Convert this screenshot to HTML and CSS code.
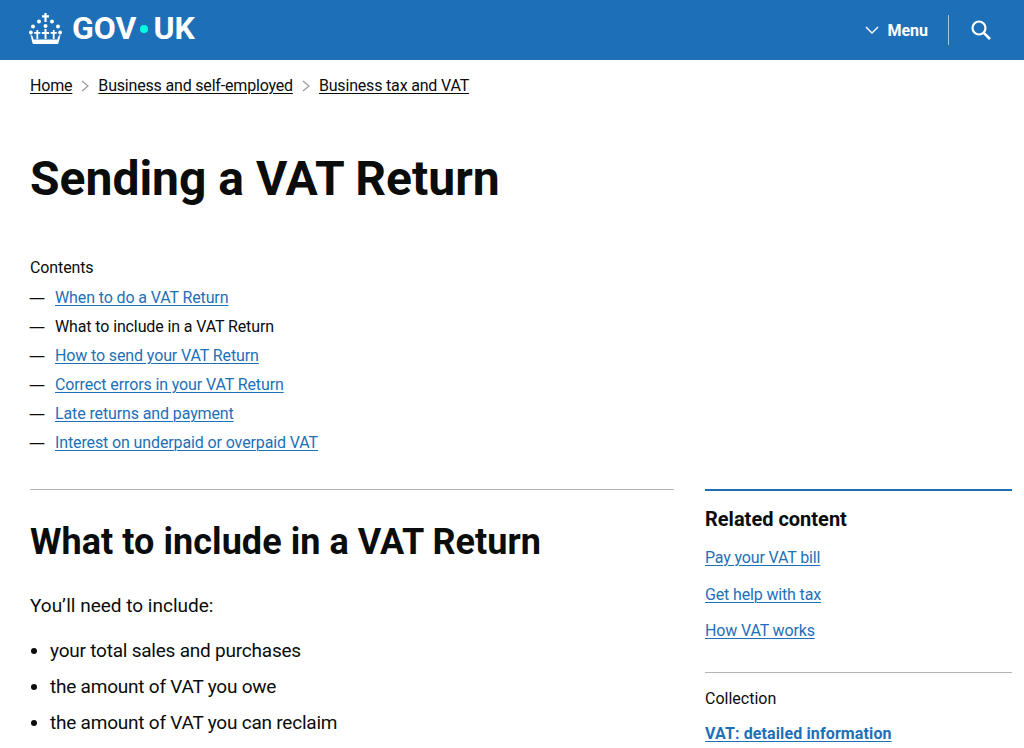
FILE: index.html
```html
<!DOCTYPE html>
<html lang="en">
<head>
<meta charset="utf-8">
<title>Sending a VAT Return</title>
<link rel="stylesheet" href="styles.css">
</head>
<body>
<header class="site-header">
  <a class="logo" href="#">
    <svg class="crown" viewBox="0 0 34 32" width="34" height="32" aria-hidden="true">
      <g fill="#fff">
        <path d="M15.400 0h2.200v2.200h2.400v2.200h-2.400V9h-2.200V4.400H13V2.200h2.400z"/>
        <circle cx="10" cy="8.500" r="2"/><circle cx="23" cy="8.500" r="2"/>
        <circle cx="4" cy="13.500" r="2"/><circle cx="29" cy="13.500" r="2"/>
        <circle cx="16.500" cy="13" r="2"/>
        <circle cx="1.900" cy="19.500" r="1.900"/><circle cx="31.100" cy="19.500" r="1.900"/>
        <path d="M15.500 16h2v3h2.600v2h-2.600v5h-2v-5h-2.600v-2h2.600z"/>
        <path d="M7.400 17h1.800v2h2.200v1.800H9.200V26H7.400v-5.200H5.200V19h2.200z"/>
        <path d="M23.800 17h1.800v2h2.200v1.800h-2.200V26h-1.800v-5.200h-2.200V19h2.200z"/>
        <path d="M1.500 21.500c2 1.200 2.700 2.600 3 5h24c.3-2.400 1-3.800 3-5l-1.300 6c-.3 1.500-.7 2.600-1.200 3.500H4c-.5-.9-.9-2-1.200-3.500z"/>
      </g>
    </svg>
    <span class="wordmark"><span>GOV</span><span class="dot"></span>UK</span>
  </a>
  <nav class="header-nav">
    <a class="menu" href="#">
      <svg class="chev" viewBox="0 0 14 9" width="14" height="9" aria-hidden="true"><path d="M1 1l6 6 6-6" fill="none" stroke="#fff" stroke-width="1.400"/></svg>
      <span>Menu</span>
    </a>
    <span class="divider"></span>
    <a class="search" href="#" aria-label="Search">
      <svg viewBox="0 0 20 20" width="20" height="20" aria-hidden="true"><circle cx="8" cy="8" r="6.500" fill="none" stroke="#fff" stroke-width="2.200"/><path d="M12.800 12.800l6.200 6.200" stroke="#fff" stroke-width="2.600"/></svg>
    </a>
  </nav>
</header>

<nav class="crumbs">
  <a href="#">Home</a>
  <svg class="sep" viewBox="0 0 8 12" width="8" height="12" aria-hidden="true"><path d="M1 1l6 5-6 5" fill="none" stroke="#9a9a9a" stroke-width="1.200"/></svg>
  <a href="#">Business and self-employed</a>
  <svg class="sep" viewBox="0 0 8 12" width="8" height="12" aria-hidden="true"><path d="M1 1l6 5-6 5" fill="none" stroke="#9a9a9a" stroke-width="1.200"/></svg>
  <a href="#">Business tax and VAT</a>
</nav>

<main class="main">
  <h1 class="title">Sending a VAT Return</h1>

  <section class="toc">
    <div class="toc-title">Contents</div>
    <ul class="toc-list">
      <li><a href="#">When to do a VAT Return</a></li>
      <li>What to include in a VAT Return</li>
      <li><a href="#">How to send your VAT Return</a></li>
      <li><a href="#">Correct errors in your VAT Return</a></li>
      <li><a href="#">Late returns and payment</a></li>
      <li><a href="#">Interest on underpaid or overpaid VAT</a></li>
    </ul>
  </section>

  <div class="columns">
    <article class="article">
      <h2 class="article-title">What to include in a VAT Return</h2>
      <p class="lead">You’ll need to include:</p>
      <ul class="bullets">
        <li>your total sales and purchases</li>
        <li>the amount of VAT you owe</li>
        <li>the amount of VAT you can reclaim</li>
      </ul>
    </article>
    <aside class="aside">
      <h2 class="aside-title">Related content</h2>
      <ul class="related">
        <li><a href="#">Pay your VAT bill</a></li>
        <li><a href="#">Get help with tax</a></li>
        <li><a href="#">How VAT works</a></li>
      </ul>
      <div class="collection">
        <div class="collection-label">Collection</div>
        <a class="collection-link" href="#">VAT: detailed information</a>
      </div>
    </aside>
  </div>
</main>
</body>
</html>
```

FILE: styles.css
```css
* { box-sizing: border-box; }
html, body { margin: 0; padding: 0; }
body {
  height: 748px;
  overflow: hidden;
  background: #fff;
  color: #0b0c0c;
  font-family: Roboto, "Noto Sans", "Liberation Sans", sans-serif;
}
a { color: #1d70b8; text-underline-offset: 2px; text-decoration-thickness: 1px; }

.site-header {
  height: 60px;
  background: #1d70b8;
  display: flex;
  align-items: center;
  justify-content: space-between;
  padding: 0 29px;
}
.logo {
  display: flex;
  align-items: center;
  gap: 9px;
  color: #fff;
  text-decoration: none;
  margin-top: -4px;
}
.crown { display: block; margin-top: 2px; }
.wordmark {
  display: flex;
  align-items: center;
  font-size: 32px;
  font-weight: 700;
  line-height: 32px;
}
.dot {
  width: 8px;
  height: 8px;
  border-radius: 50%;
  background: #00ffe0;
  margin: 2px 5px 0 4px;
}
.header-nav { display: flex; align-items: center; margin-right: 4px; }
.menu {
  display: flex;
  align-items: center;
  gap: 8px;
  color: #fff;
  font-size: 16px;
  font-weight: 700;
  text-decoration: none;
}
.divider { width: 1px; height: 30px; background: #a5c6e3; margin: 0 22px 0 20px; }
.search { display: flex; color: #fff; }

.crumbs {
  display: flex;
  align-items: center;
  gap: 9px;
  padding: 15px 30px 0;
  font-size: 16px;
  line-height: 22px;
  letter-spacing: -0.18px;
}
.crumbs a { color: #0b0c0c; }
.main { padding: 0 12px 0 30px; }
.title {
  margin: 56px 0 0;
  font-size: 48px;
  line-height: 52px;
  font-weight: 700;
}
.toc { margin-top: 53px; font-size: 16px; line-height: 20px; letter-spacing: -0.12px; }
.toc-title { margin-bottom: 10px; }
.toc-list { list-style: none; margin: 0; padding: 0; }
.toc-list li { position: relative; padding-left: 25px; height: 29px; line-height: 20px; }
.toc-list li::before { content: "—"; position: absolute; left: -1px; top: -1px; color: #0b0c0c; font-family: "Noto Sans", sans-serif; }

.columns { display: flex; gap: 31px; margin-top: 27px; }
.article { width: 644px; border-top: 1px solid #b1b4b6; }
.article-title { margin: 29px 0 0; font-size: 36px; line-height: 46px; font-weight: 700; letter-spacing: 0.05px; }
.lead { margin: 28px 0 0; font-size: 19px; line-height: 26px; }
.bullets { margin: 19px 0 0; padding: 0 0 0 20px; font-size: 19px; line-height: 26px; letter-spacing: -0.22px; }
.bullets li { margin-bottom: 10px; }

.aside { width: 307px; border-top: 2px solid #1d70b8; }
.aside-title { margin: 16px 0 0; font-size: 20px; line-height: 24px; font-weight: 700; }
.related { list-style: none; margin: 16px 0 0; padding: 0; font-size: 16px; line-height: 22px; letter-spacing: -0.15px; }
.related li { margin-bottom: 14.500px; }
.collection { margin-top: 30px; border-top: 1px solid #b1b4b6; padding-top: 15px; font-size: 16px; line-height: 22px; }
.collection-link { display: inline-block; margin-top: 13px; font-weight: 700; letter-spacing: 0.12px; }
```
